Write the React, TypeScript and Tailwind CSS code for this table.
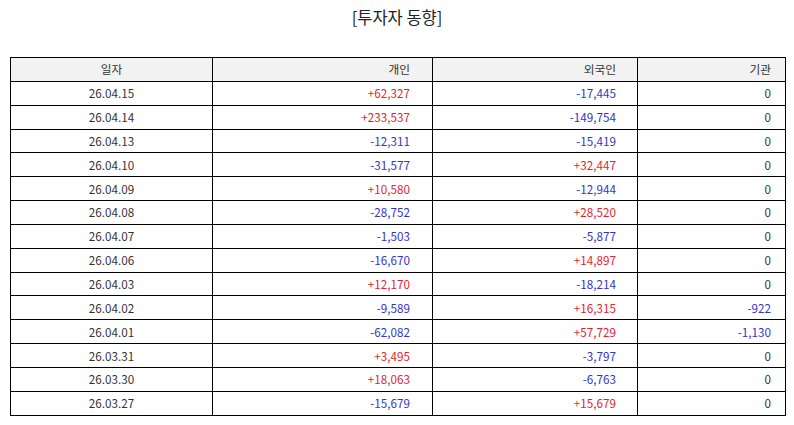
import React from "react";

type Row = { d: string; p: string; f: string; i: string };

const rows: Row[] = [
  { d: "26.04.15", p: "+62,327", f: "-17,445", i: "0" },
  { d: "26.04.14", p: "+233,537", f: "-149,754", i: "0" },
  { d: "26.04.13", p: "-12,311", f: "-15,419", i: "0" },
  { d: "26.04.10", p: "-31,577", f: "+32,447", i: "0" },
  { d: "26.04.09", p: "+10,580", f: "-12,944", i: "0" },
  { d: "26.04.08", p: "-28,752", f: "+28,520", i: "0" },
  { d: "26.04.07", p: "-1,503", f: "-5,877", i: "0" },
  { d: "26.04.06", p: "-16,670", f: "+14,897", i: "0" },
  { d: "26.04.03", p: "+12,170", f: "-18,214", i: "0" },
  { d: "26.04.02", p: "-9,589", f: "+16,315", i: "-922" },
  { d: "26.04.01", p: "-62,082", f: "+57,729", i: "-1,130" },
  { d: "26.03.31", p: "+3,495", f: "-3,797", i: "0" },
  { d: "26.03.30", p: "+18,063", f: "-6,763", i: "0" },
  { d: "26.03.27", p: "-15,679", f: "+15,679", i: "0" },
];

function color(v: string) {
  if (v.startsWith("+")) return "text-[#e0252f]";
  if (v.startsWith("-")) return "text-[#3434c8]";
  return "text-[#333333]";
}

export default function App() {
  return (
    <div className="w-[794px] h-[425px] bg-white font-['Noto_Sans_CJK_KR','Noto_Sans',sans-serif] text-[#333333]">
      <div className="pt-[5px] h-[57px] text-center text-[16.5px] leading-[24px] text-[#222222]">[투자자 동향]</div>
      <div className="px-[10px]">
        <table className="w-[775px] border-collapse table-fixed text-[11.7px]">
          <colgroup>
            <col className="w-[202px]" />
            <col className="w-[220px]" />
            <col className="w-[205px]" />
            <col className="w-[148px]" />
          </colgroup>
          <thead>
            <tr className="h-[23.85px] bg-[#f2f2f2]">
              <th className="border border-black font-normal text-center p-0 leading-[14px]">일자</th>
              <th className="border border-black font-normal text-right p-0 pr-[22px] leading-[14px]">개인</th>
              <th className="border border-black font-normal text-right p-0 pr-[21px] leading-[14px]">외국인</th>
              <th className="border border-black font-normal text-right p-0 pr-[14px] leading-[14px]">기관</th>
            </tr>
          </thead>
          <tbody>
            {rows.map((r) => (
              <tr key={r.d} className="h-[23.85px]">
                <td className="border border-black text-center p-0 leading-[14px]">{r.d}</td>
                <td className={`border border-black text-right p-0 pr-[22px] leading-[14px] ${color(r.p)}`}>{r.p}</td>
                <td className={`border border-black text-right p-0 pr-[21px] leading-[14px] ${color(r.f)}`}>{r.f}</td>
                <td className={`border border-black text-right p-0 pr-[14px] leading-[14px] ${color(r.i)}`}>{r.i}</td>
              </tr>
            ))}
          </tbody>
        </table>
      </div>
    </div>
  );
}
